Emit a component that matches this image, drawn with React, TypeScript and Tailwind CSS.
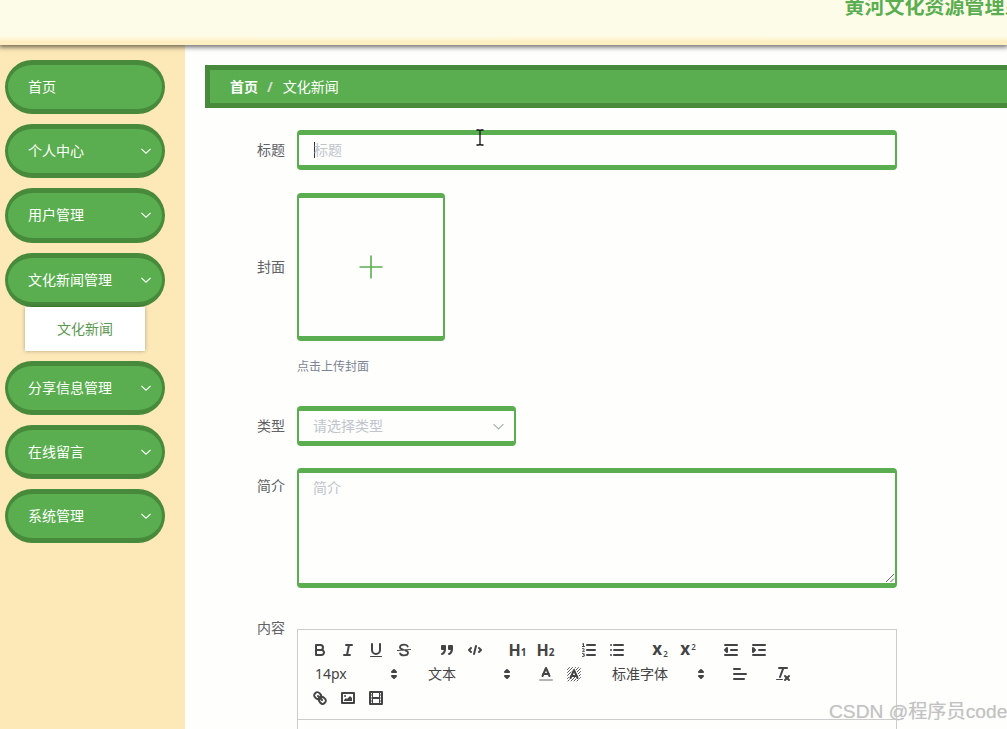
import React from 'react'

const menus = [
  { name: '首页', arrow: false },
  { name: '个人中心', arrow: true },
  { name: '用户管理', arrow: true },
  { name: '文化新闻管理', arrow: true, child: '文化新闻' },
  { name: '分享信息管理', arrow: true },
  { name: '在线留言', arrow: true },
  { name: '系统管理', arrow: true },
]

const Down = ({ className }: { className: string }) => (
  <svg viewBox="0 0 12 12" className={className} fill="none" stroke="currentColor" strokeWidth="1.1">
    <path d="M1.4 3.8 6 8.2 10.6 3.8" />
  </svg>
)

const Btn = ({ children }: { children: React.ReactNode }) => (
  <button className="flex h-6 w-7 items-center justify-center">
    <svg viewBox="0 0 18 18" className="h-[18px] w-[18px]" fill="none" stroke="#444" strokeWidth="2" strokeLinecap="round" strokeLinejoin="round">
      {children}
    </svg>
  </button>
)

const Picker = ({ label, className }: { label: string; className: string }) => (
  <div className={`flex h-6 items-center justify-between pl-2 text-sm text-[#444] ${className}`}>
    <span className="pl-px">{label}</span>
    <svg viewBox="0 0 18 18" className="mr-px h-[18px] w-[18px]" fill="#444" stroke="#444" strokeWidth="2" strokeLinejoin="round">
      <polygon points="7 11 9 13 11 11 7 11" />
      <polygon points="7 7 9 5 11 7 7 7" />
    </svg>
  </div>
)

const Group = ({ children }: { children: React.ReactNode }) => <div className="mr-[15px] flex">{children}</div>

const Toolbar = () => (
  <div className="flex h-[90px] flex-wrap content-start border-b border-[#ccc] p-2">
    <Group>
      <Btn>
        <path d="M5,4H9.5A2.5,2.5,0,0,1,12,6.5v0A2.5,2.5,0,0,1,9.5,9H5V4Z" />
        <path d="M5,9h5.5A2.5,2.5,0,0,1,13,11.5v0A2.5,2.5,0,0,1,10.5,14H5V9Z" />
      </Btn>
      <Btn>
        <line x1="7" x2="13" y1="4" y2="4" />
        <line x1="5" x2="11" y1="14" y2="14" />
        <line x1="8" x2="10" y1="14" y2="4" />
      </Btn>
      <Btn>
        <path d="M5,3V9a4.012,4.012,0,0,0,4,4H9a4.012,4.012,0,0,0,4-4V3" />
        <rect x="3" y="15" width="12" height="1" rx="0.5" fill="#444" stroke="none" />
      </Btn>
      <Btn>
        <line x1="15.5" x2="2.5" y1="8.5" y2="9.5" strokeWidth="1" />
        <path strokeWidth="1.8" d="M12.7,5.5C12.2,4,10.8,3.6,9,3.6C6.6,3.6,5,4.7,5,6.3C5,7.6,6,8.2,8,8.6M10.2,9.4C12.2,9.9,13,10.6,13,11.8C13,13.4,11.4,14.4,9,14.4C7,14.4,5.6,13.9,5.1,12.4" />
      </Btn>
    </Group>
    <Group>
      <Btn>
        <g fill="#444">
          <rect height="3" width="3" x="4" y="5" />
          <rect height="3" width="3" x="11" y="5" />
          <path d="M7,8c0,4.031-3,5-3,5" />
          <path d="M14,8c0,4.031-3,5-3,5" />
        </g>
      </Btn>
      <Btn>
        <polyline points="5 7 3 9 5 11" />
        <polyline points="13 7 15 9 13 11" />
        <line x1="10" x2="8" y1="5" y2="13" />
      </Btn>
    </Group>
    <Group>
      <button className="flex h-6 w-7 items-center justify-center pr-px font-['Open_Sans',sans-serif] text-base font-bold text-[#444]">
        H<span className="pt-1 text-[10px]">1</span>
      </button>
      <button className="flex h-6 w-7 items-center justify-center pr-px font-['Open_Sans',sans-serif] text-base font-bold text-[#444]">
        H<span className="pt-1 text-[10px]">2</span>
      </button>
    </Group>
    <Group>
      <Btn>
        <line x1="7" x2="15" y1="4" y2="4" />
        <line x1="7" x2="15" y1="9" y2="9" />
        <line x1="7" x2="15" y1="14" y2="14" />
        <g strokeWidth="1">
          <path d="M2.5,5.5h2M3.5,5.5v-3L2.5,3" />
          <path d="M2.5,7.6c2-.8,2.6,.6,0,2.7h2" />
          <path d="M2.5,12.4c2.5-.5,2.4,1.5,.8,1.5c2,0,1.8,2.1-.8,1.6" />
        </g>
      </Btn>
      <Btn>
        <line x1="6" x2="15" y1="4" y2="4" />
        <line x1="6" x2="15" y1="9" y2="9" />
        <line x1="6" x2="15" y1="14" y2="14" />
        <line x1="3" x2="3" y1="4" y2="4" />
        <line x1="3" x2="3" y1="9" y2="9" />
        <line x1="3" x2="3" y1="14" y2="14" />
      </Btn>
    </Group>
    <Group>
      <button className="flex h-6 w-7 items-center justify-center font-['Open_Sans',sans-serif] text-[17px] font-bold text-[#444]">
        <span className="-mt-[3px]">x</span><span className="pt-2 pl-px text-[8px] font-semibold">2</span>
      </button>
      <button className="flex h-6 w-7 items-center justify-center font-['Open_Sans',sans-serif] text-[17px] font-bold text-[#444]">
        <span className="-mt-[3px]">x</span><span className="pb-[7px] pl-px text-[8px] font-semibold">2</span>
      </button>
    </Group>
    <Group>
      <Btn>
        <line x1="3" x2="15" y1="14" y2="14" />
        <line x1="3" x2="15" y1="4" y2="4" />
        <line x1="9" x2="15" y1="9" y2="9" />
        <polyline points="5 7 5 11 3 9 5 7" fill="#444" />
      </Btn>
      <Btn>
        <line x1="3" x2="15" y1="14" y2="14" />
        <line x1="3" x2="15" y1="4" y2="4" />
        <line x1="9" x2="15" y1="9" y2="9" />
        <polyline points="3 7 3 11 5 9 3 7" fill="#444" />
      </Btn>
    </Group>

    {/* second row */}
    <Group><Picker label="14px" className="w-[98px]" /></Group>
    <Group><Picker label="文本" className="w-[98px]" /></Group>
    <Group>
      <Btn>
        <line x1="3" x2="15" y1="15" y2="15" opacity="0.4" />
        <polyline points="5.5 11 9 3 12.5 11" />
        <line x1="11.63" x2="6.38" y1="9" y2="9" />
      </Btn>
      <Btn>
        <path strokeWidth="0.9" d="M2.5 4.500l2-2M2.500 7.500l5-5M2.500 10.500l8-8M2.500 13.500l11-11M3 16l12.500-12.500M6 16l9.500-9.500M9 16l6.500-6.500M12 16l3.500-3.500" />
        <polyline points="5.5 13 9 5 12.5 13" stroke="#fff" strokeWidth="3.6" />
        <polyline points="5.5 13 9 5 12.5 13" />
        <line x1="11.63" x2="6.38" y1="11" y2="11" />
      </Btn>
    </Group>
    <Group><Picker label="标准字体" className="w-[108px]" /></Group>
    <Group>
      <Btn>
        <line x1="3" x2="15" y1="9" y2="9" />
        <line x1="3" x2="13" y1="14" y2="14" />
        <line x1="3" x2="9" y1="4" y2="4" />
      </Btn>
    </Group>
    <Group>
      <Btn>
        <line x1="5" x2="13" y1="3" y2="3" />
        <line x1="6" x2="9.35" y1="12" y2="3" />
        <line x1="11" x2="15" y1="11" y2="15" />
        <line x1="15" x2="11" y1="11" y2="15" />
        <rect x="2" y="14" width="7" height="1" rx="0.5" fill="#444" stroke="none" />
      </Btn>
    </Group>

    {/* third row */}
    <div className="flex w-full">
      <Btn>
        <line x1="7" x2="11" y1="7" y2="11" />
        <path d="M8.9,4.577a3.476,3.476,0,0,1,.36,4.679A3.476,3.476,0,0,1,4.577,8.9C3.185,7.5,2.035,6.4,4.217,4.217S7.5,3.185,8.9,4.577Z" />
        <path d="M13.423,9.1a3.476,3.476,0,0,0-4.679-.36,3.476,3.476,0,0,0,.36,4.679c1.392,1.392,2.5,2.542,4.679.36S14.815,10.5,13.423,9.1Z" />
      </Btn>
      <Btn>
        <rect height="10" width="12" x="3" y="4" />
        <circle cx="6" cy="7" r="1" fill="#444" stroke="none" />
        <polyline points="5 12 5 11 7 9 8 10 11 7 13 9 13 12 5 12" fill="#444" stroke="none" />
      </Btn>
      <Btn>
        <rect height="12" width="12" x="3" y="3" />
        <path strokeLinecap="butt" d="M5.5 3v12M12.5 3v12" strokeWidth="1" />
        <path d="M6 9h6" />
        <path d="M3 6h2M3 9h2M3 12h2M13 6h2M13 9h2M13 12h2" strokeWidth="1" />
      </Btn>
    </div>
  </div>
)

const Label = ({ text, className }: { text: string; className: string }) => (
  <label className={`w-20 shrink-0 pr-3 text-right text-sm text-[#606266] ${className}`}>{text}</label>
)

const App = () => {
  return (
    <div className="relative flex h-[729px] w-[1007px] flex-col overflow-hidden bg-[#fefefd] font-['Noto_Sans','Noto_Sans_CJK_SC',sans-serif]">
      <header className="relative z-10 flex h-[45px] shrink-0 justify-end bg-linear-to-b from-[#fcfce9] from-80% to-[#ffefc2] to-92% shadow-[0_1px_5px_1px_rgba(0,0,0,0.6)]">
        <h1 className="-mt-2 w-[162.500px] overflow-hidden text-xl leading-[30px] font-bold whitespace-nowrap text-[#5bae50]">黄河文化资源管理系统</h1>
      </header>

      <div className="flex min-h-0 flex-1">
        <aside className="w-[185px] shrink-0 bg-[#fde8b8] px-[5px] pt-[15px]">
          {menus.map((item) => (
            <div key={item.name} className="mb-[10px] w-40">
              <div className="flex h-[54.2px] items-center justify-between rounded-[30px] border-x-[3px] border-y-[5px] border-[#478a3c] bg-[#5aae4f] pr-[10px] pl-5 text-sm text-white">
                <span>{item.name}</span>
                {item.arrow && <Down className="h-3 w-3" />}
              </div>
              {item.child && (
                <div className="mx-5 flex h-[44px] items-center justify-center bg-white text-sm text-[#5a9a50] shadow-[0_0_4px_rgba(0,0,0,0.3)]">
                  {item.child}
                </div>
              )}
            </div>
          ))}
        </aside>

        <main className="flex-1 pt-5 pl-5">
          <div className="flex h-[43px] items-center border-[5px] border-r-0 border-[#478a3c] bg-[#5aae4f] pl-5 text-sm text-white">
            <span className="font-bold">首页</span>
            <span className="mr-[10px] ml-[9px] font-bold text-[#d5dccf]">/</span>
            <span>文化新闻</span>
          </div>

          <form className="mt-[22px] ml-3">
            <div className="flex">
              <Label text="标题" className="leading-[40px]" />
              <div className="flex h-10 w-[600px] items-center rounded border-x-2 border-y-[5px] border-[#5bae50] pl-[15px] text-sm text-[#c0c4cc]">
                <span className="-mr-px h-4 w-px bg-[#333]"></span>
                标题
              </div>
            </div>

            <div className="mt-[22.500px] flex">
              <Label text="封面" className="leading-[148px]" />
              <div>
                <div className="flex h-[148px] w-[148px] items-center justify-center rounded border-x-2 border-y-[5px] border-[#5bae50]">
                  <svg viewBox="0 0 24 24" className="h-6 w-6" stroke="#5bae50" strokeWidth="1.6">
                    <path d="M12 .5v23M.5 12h23" />
                  </svg>
                </div>
                <p className="mt-[16.500px] text-xs leading-5 text-[#7c8494]">点击上传封面</p>
              </div>
            </div>

            <div className="mt-[29px] flex">
              <Label text="类型" className="leading-[40px]" />
              <div className="flex h-10 w-[219px] items-center justify-between rounded border-x-2 border-y-[5px] border-[#5bae50] pr-[9px] pl-[14px] text-sm text-[#c0c4cc]">
                <span>请选择类型</span>
                <Down className="h-[13px] w-[13px] text-[#a5b5a5]" />
              </div>
            </div>

            <div className="mt-[22px] flex">
              <Label text="简介" className="leading-9" />
              <div className="relative h-[120px] w-[600px] rounded border-x-2 border-y-[5px] border-[#5bae50] px-[14px] pt-[5px] text-sm text-[#c0c4cc]">
                简介
                <svg viewBox="0 0 10 10" className="absolute right-0 bottom-0 h-[10px] w-[10px]" stroke="#666" strokeWidth="1">
                  <path d="M1 9 9 1M5.500 9 9 5.500" />
                </svg>
              </div>
            </div>

            <div className="mt-[41px] flex">
              <Label text="内容" className="-mt-[21px] leading-[40px]" />
              <div className="h-[200px] w-[600px] border border-[#ccc]">
                <Toolbar />
              </div>
            </div>
          </form>
        </main>
      </div>

      {/* text cursor over the title input */}
      <svg viewBox="0 0 8 18" className="absolute top-[129px] left-[475.500px] h-[18px] w-2" fill="none" stroke="#111" strokeWidth="1.3">
        <path d="M.5 1h2.500l1 .7 1-.7H7.500M4 1.500v14M.5 16h2.500l1-.7 1 .7H7.500" />
      </svg>
      <div className="absolute top-[697px] left-[829px] font-['Liberation_Sans','Noto_Sans_CJK_SC',sans-serif] text-[19.200px] leading-[30px] whitespace-nowrap text-[#c2c2c2] [text-shadow:0_0_1px_#ddd]">
        CSDN @程序员code
      </div>
    </div>
  )
}

export default App
